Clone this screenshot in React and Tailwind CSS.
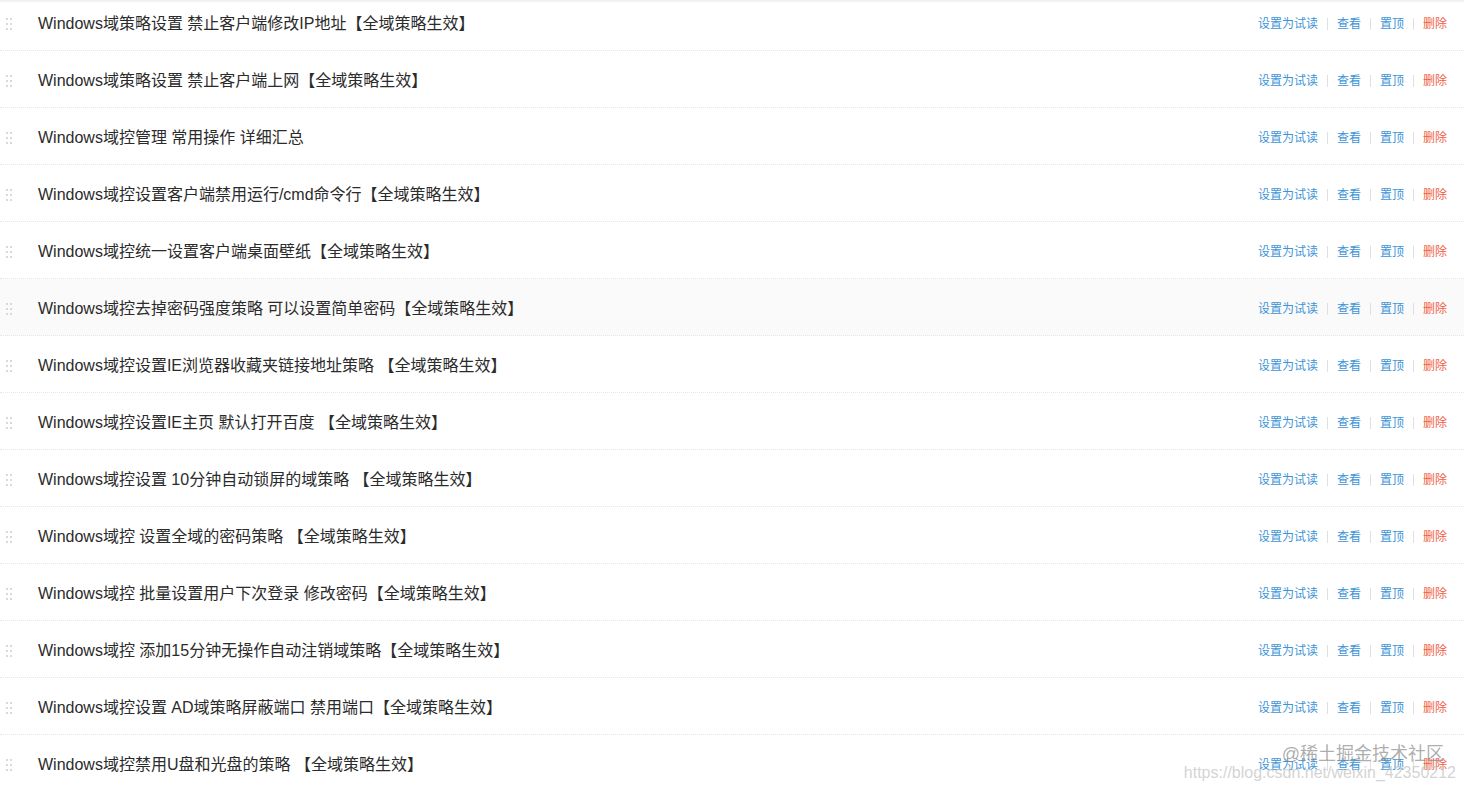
import React from "react";

const items = [
  "Windows域策略设置 禁止客户端修改IP地址【全域策略生效】",
  "Windows域策略设置 禁止客户端上网【全域策略生效】",
  "Windows域控管理 常用操作 详细汇总",
  "Windows域控设置客户端禁用运行/cmd命令行【全域策略生效】",
  "Windows域控统一设置客户端桌面壁纸【全域策略生效】",
  "Windows域控去掉密码强度策略 可以设置简单密码【全域策略生效】",
  "Windows域控设置IE浏览器收藏夹链接地址策略 【全域策略生效】",
  "Windows域控设置IE主页 默认打开百度 【全域策略生效】",
  "Windows域控设置 10分钟自动锁屏的域策略 【全域策略生效】",
  "Windows域控 设置全域的密码策略 【全域策略生效】",
  "Windows域控 批量设置用户下次登录 修改密码【全域策略生效】",
  "Windows域控 添加15分钟无操作自动注销域策略【全域策略生效】",
  "Windows域控设置 AD域策略屏蔽端口 禁用端口【全域策略生效】",
  "Windows域控禁用U盘和光盘的策略 【全域策略生效】",
];

function Handle() {
  return (
    <div className="grid grid-cols-2 gap-x-[2px] gap-y-[3px] w-[6px] ml-[6px]">
      {Array.from({ length: 6 }).map((_, i) => (
        <span key={i} className="block w-[2px] h-[2px] bg-[#d9d9d9]" />
      ))}
    </div>
  );
}

function Sep() {
  return <span className="block w-px h-[12px] bg-[#e0e0e0] mx-[9px]" />;
}

function Row({ title, hover }) {
  return (
    <div
      className={`flex items-center h-[57px] pt-[4px] border-b border-dotted border-[#e6e6e6] ${
        hover ? "bg-[#fafafa]" : "bg-white"
      }`}
    >
      <Handle />
      <div className="ml-[26px] flex-1 text-[16px] text-[#2b2b2b] whitespace-nowrap">
        {title}
      </div>
      <div className="flex items-center text-[12px] mr-[17px]">
        <span className="text-[#3d94d6]">设置为试读</span>
        <Sep />
        <span className="text-[#3d94d6]">查看</span>
        <Sep />
        <span className="text-[#3d94d6]">置顶</span>
        <Sep />
        <span className="text-[#f0603f]">删除</span>
      </div>
    </div>
  );
}

export default function App() {
  return (
    <div
      className="relative w-[1464px] h-[790px] overflow-hidden bg-white"
      style={{ fontFamily: '"Liberation Sans", "Noto Sans CJK SC", sans-serif' }}
    >
      <div className="-mt-[6px]">
        {items.map((t, i) => (
          <Row key={i} title={t} hover={i === 5} />
        ))}
      </div>
      <div className="absolute top-0 left-0 right-0 h-[3px] bg-gradient-to-b from-[#ececec] to-transparent" />
      <div className="absolute right-[20px] top-[745px] text-[18px] text-[#8a8a8a]/70 leading-none whitespace-nowrap">
        @稀土掘金技术社区
      </div>
      <div className="absolute right-[8px] top-[765px] text-[16px] text-[#c8c8c8]/80 leading-none whitespace-nowrap">
        https://blog.csdn.net/weixin_42350212
      </div>
    </div>
  );
}
